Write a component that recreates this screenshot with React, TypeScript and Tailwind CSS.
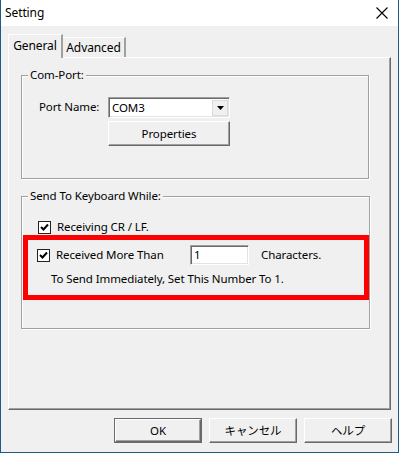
import React from "react"

const font = { fontFamily: '"Noto Sans", "Noto Sans CJK JP", sans-serif' }

const raised =
	"border border-t-white border-l-white border-r-[#696969] border-b-[#696969] shadow-[inset_-1px_-1px_0_#a0a0a0]"
const sunken =
	"border border-t-[#a0a0a0] border-l-[#a0a0a0] border-r-white border-b-white shadow-[inset_1px_1px_0_#696969,inset_-1px_-1px_0_#e3e3e3] bg-white"

const Check: React.FC = () => (
	<div className="w-[13px] h-[13px] border border-[#222] bg-white flex items-center justify-center shrink-0">
		<svg width="9" height="9" viewBox="0 0 9 9">
			<path d="M1 4 L3.5 6.5 L8 1.5" stroke="#000" strokeWidth="2" fill="none" />
		</svg>
	</div>
)

const Group: React.FC<{ title: string; className: string; children: React.ReactNode }> = ({
	title,
	className,
	children,
}) => (
	<div
		className={`relative border border-[#a0a0a0] shadow-[1px_1px_0_white,inset_1px_1px_0_white] ${className}`}
	>
		<span className="absolute -top-[9px] left-[6px] bg-[#f0f0f0] px-[2px] leading-[16px]">{title}</span>
		{children}
	</div>
)

const DialogButton: React.FC<{ label: string; isDefault?: boolean }> = ({ label, isDefault }) => (
	<div
		className={`w-[88px] h-[25px] ${isDefault ? "border border-[#6b6b6b]" : ""} bg-[#f0f0f0]`}
	>
		<div className={`w-full h-full flex items-center justify-center ${raised}`}>{label}</div>
	</div>
)

export default function App() {
	return (
		<div
			className="w-[399px] h-[453px] bg-[#f0f0f0] border-x border-b border-[#1a5c85] text-[11.5px] tracking-[-0.1px] text-black flex flex-col"
			style={font}
		>
			{/* title bar */}
			<div className="h-[26px] bg-white flex items-center justify-between pl-[4px] pr-[10px] shrink-0">
				<span className="text-[12px]">Setting</span>
				<svg width="12" height="12" viewBox="0 0 12 12">
					<path d="M0.5 0.5 L11.5 11.5 M11.5 0.5 L0.5 11.5" stroke="#000" strokeWidth="1.1" />
				</svg>
			</div>

			<div className="pl-[7px] pt-[8px]">
				{/* tabs */}
				<div className="flex items-end h-[23px] relative z-10">
					<div className="w-[55px] h-[24px] bg-[#f0f0f0] border-t border-l border-white border-r-2 border-r-[#a0a0a0] flex items-start justify-center pt-[2px] -mb-[1px] text-[12px]">
						General
					</div>
					<div className="w-[63px] h-[20px] bg-[#f0f0f0] border-t border-white border-r-2 border-r-[#a0a0a0] flex items-start justify-center pt-[1px] text-[12px]">
						Advanced
					</div>
				</div>

				{/* panel */}
				<div className="w-[383px] h-[353px] border border-t-white border-l-white border-r-[#696969] border-b-[#696969] shadow-[inset_-1px_-1px_0_#a0a0a0] pl-[12px] pt-[17px]">
					<Group title="Com-Port:" className="w-[348px] h-[104px]">
						<div className="flex pl-[17px] pt-[21px]">
							<span className="w-[69px] pt-[2px] leading-[16px]">Port Name:</span>
							<div className="flex flex-col gap-[3px]">
								<div className={`w-[122px] h-[21px] flex items-center ${sunken} px-[3px]`}>
									<span className="flex-1 leading-[16px]">COM3</span>
									<div className="w-[16px] h-[16px] -mr-[2px] flex items-center justify-center border border-[#dcdcdc] bg-[#f0f0f0]">
										<svg width="7" height="4" viewBox="0 0 7 4">
											<path d="M0 0 H7 L3.5 4 Z" fill="#000" />
										</svg>
									</div>
								</div>
								<div className={`w-[122px] h-[25px] flex items-center justify-center bg-[#f0f0f0] ${raised}`}>
									Properties
								</div>
							</div>
						</div>
					</Group>

					<Group title="Send To Keyboard While:" className="w-[349px] h-[133px] mt-[17px]">
						<div className="pl-[16px] pt-[22px] flex items-center gap-[6px] leading-[16px]">
							<Check />
							<span>Receiving CR / LF.</span>
						</div>
						<div className="ml-[1px] w-[346px] h-[65px] border-[5px] border-[#ff0000] pt-[5px]">
							<div className="flex items-center pl-[9px]">
								<Check />
								<span className="ml-[6px] w-[134px] leading-[16px] whitespace-nowrap">Received More Than</span>
								<div className={`w-[59px] h-[20px] ${sunken} px-[3px] leading-[16px] flex items-center`}>
									1
								</div>
								<span className="ml-[12px] leading-[16px]">Characters.</span>
							</div>
							<div className="pl-[23px] pt-[6px] leading-[16px]">
								To Send Immediately, Set This Number To 1.
							</div>
						</div>
					</Group>
				</div>
			</div>

			{/* buttons */}
			<div className="flex justify-end gap-[7px] pr-[6px] pt-[8px]">
				<DialogButton label="OK" isDefault />
				<DialogButton label="キャンセル" />
				<DialogButton label="ヘルプ" />
			</div>
		</div>
	)
}
